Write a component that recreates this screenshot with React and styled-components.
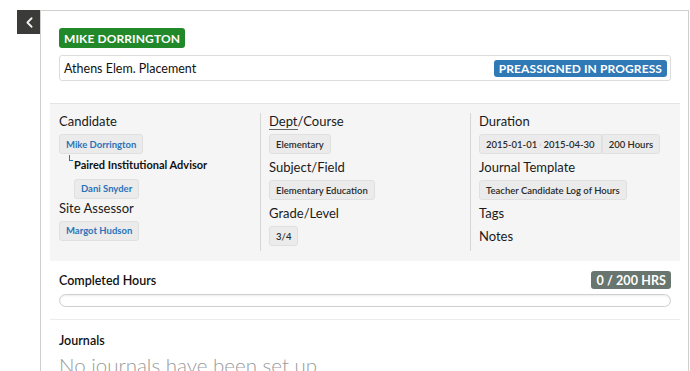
import React from "react";
import styled, { createGlobalStyle } from "styled-components";
import { ChevronLeft } from "lucide-react";

const Global = createGlobalStyle`
  html, body { margin: 0; padding: 0; background: #fff; }
  body { font-family: Lato, "Open Sans", sans-serif; color: #222; overflow: hidden; }
`;

const Page = styled.div`
  display: flex;
  align-items: flex-start;
  padding: 10px 1px 0 17px;
  height: 361px;
  overflow: hidden;
`;

const BackButton = styled.button`
  width: 24px;
  height: 24px;
  flex: none;
  border: none;
  padding: 0;
  background: #3b3b39;
  color: #f2f2f2;
  display: flex;
  align-items: center;
  justify-content: center;
`;

const Panel = styled.div`
  flex: 1;
  min-height: 400px;
  margin-left: -1px;
  border: 1px solid #cfcfcf;
  border-bottom: none;
  background: #fff;
`;

const Header = styled.div`
  padding: 17px 17px 22px 18px;
  display: flex;
  flex-direction: column;
  align-items: flex-start;
  gap: 7px;
`;

const Label = styled.span`
  display: inline-flex;
  align-items: center;
  height: ${(p) => p.$h || 20}px;
  padding: 0 ${(p) => p.$px || 5}px;
  border-radius: 3px;
  background: ${(p) => p.$bg};
  color: #fff;
  font-weight: 700;
  font-size: ${(p) => p.$fs || 12}px;
  letter-spacing: 0.1px;
  white-space: nowrap;
`;

const PlacementBox = styled.div`
  align-self: stretch;
  height: 24px;
  border: 1px solid #dcdcdc;
  border-radius: 3px;
  display: flex;
  align-items: center;
  justify-content: space-between;
  padding: 0 3px 0 4px;
  font-size: 12.5px;
  color: #111;
`;

const InfoSection = styled.div`
  margin: 0 8px 0 9px;
  background: #f5f5f5;
  border-top: 1px solid #e4e4e4;
  display: grid;
  grid-template-columns: 210px 210px 1fr;
  padding: 9px 0 10px;
`;

const Column = styled.div`
  padding: 0 9px 0 ${(p) => (p.$first ? 9 : 8)}px;
  border-left: ${(p) => (p.$first ? "none" : "1px solid #d6d6d6")};
  display: flex;
  flex-direction: column;
  align-items: flex-start;
`;

const Field = styled.div`
  display: flex;
  flex-direction: column;
  align-items: flex-start;
  gap: 4px;
  margin-bottom: ${(p) => (p.$mb !== undefined ? p.$mb : 5)}px;
`;

const Heading = styled.div`
  font-size: 13px;
  line-height: 17px;
  color: #1a1a1a;
`;

const Abbr = styled.span`
  border-bottom: 1px solid #666;
`;

const Chip = styled.span`
  display: inline-flex;
  align-items: center;
  height: 20px;
  box-sizing: border-box;
  padding: 0 6px;
  background: #ebebeb;
  border: 1px solid #e0e0e0;
  border-radius: ${(p) => p.$radius || "3px"};
  font-size: 9.5px;
  font-weight: ${(p) => (p.$link ? 700 : 600)};
  color: ${(p) => (p.$link ? "#2a73b8" : "#2a2a2a")};
  white-space: nowrap;
`;

const ChipGroup = styled.div`
  display: flex;
`;

const Sep = styled.span`
  color: #c4c4c4;
  margin: 0 2px;
  font-size: 8px;
`;

const SubRole = styled.div`
  display: flex;
  flex-direction: column;
  align-items: flex-start;
  gap: 3px;
  margin: 3px 0 1px 10px;
`;

const SubRoleLabel = styled.div`
  position: relative;
  padding-left: 5px;
  font-size: 11px;
  line-height: 16px;
  font-weight: 700;
  color: #111;
  &::before {
    content: "";
    position: absolute;
    left: 0;
    top: -2px;
    width: 3px;
    height: 5px;
    border-left: 1px solid #2a73b8;
    border-bottom: 1px solid #2a73b8;
  }
`;

const SubRoleChip = styled.div`
  padding-left: 5px;
`;

const HoursSection = styled.div`
  margin: 0 8px 0 9px;
  padding: 10px 9px 12px;
  border-bottom: 1px solid #ececec;
  display: flex;
  flex-direction: column;
  gap: 5px;
`;

const HoursRow = styled.div`
  display: flex;
  align-items: center;
  justify-content: space-between;
`;

const SmallTitle = styled.div`
  font-size: 12.5px;
  font-weight: 600;
  color: #111;
`;

const Progress = styled.div`
  height: 13px;
  box-sizing: border-box;
  border: 1px solid #cfcfcf;
  border-radius: 7px;
  background: #fff;
  box-shadow: inset 0 1px 2px rgba(0, 0, 0, 0.08);
`;

const Journals = styled.div`
  margin: 0 8px 0 9px;
  padding: 13px 9px 0;
  display: flex;
  flex-direction: column;
  gap: 5px;
`;

const EmptyText = styled.div`
  font-size: 20.5px;
  font-weight: 300;
  color: #9a9a9a;
  line-height: 24px;
`;

export default function App() {
  return (
    <>
      <Global />
      <Page>
        <BackButton aria-label="Back">
          <ChevronLeft size={17} strokeWidth={2.5} />
        </BackButton>
        <Panel>
          <Header>
            <Label $bg="#22892b">MIKE DORRINGTON</Label>
            <PlacementBox>
              <span>Athens Elem. Placement</span>
              <Label $bg="#2f79b7" $h={17} $fs={12}>PREASSIGNED IN PROGRESS</Label>
            </PlacementBox>
          </Header>

          <InfoSection>
            <Column $first>
              <Field $mb={0}>
                <Heading>Candidate</Heading>
                <Chip $link>Mike Dorrington</Chip>
              </Field>
              <SubRole>
                <SubRoleLabel>Paired Institutional Advisor</SubRoleLabel>
                <SubRoleChip>
                  <Chip $link>Dani Snyder</Chip>
                </SubRoleChip>
              </SubRole>
              <Field>
                <Heading>Site Assessor</Heading>
                <Chip $link>Margot Hudson</Chip>
              </Field>
            </Column>
            <Column>
              <Field>
                <Heading><Abbr>Dept</Abbr>/Course</Heading>
                <Chip>Elementary</Chip>
              </Field>
              <Field>
                <Heading>Subject/Field</Heading>
                <Chip>Elementary Education</Chip>
              </Field>
              <Field>
                <Heading>Grade/Level</Heading>
                <Chip>3/4</Chip>
              </Field>
            </Column>
            <Column>
              <Field>
                <Heading>Duration</Heading>
                <ChipGroup>
                  <Chip $radius="3px 0 0 3px">2015-01-01<Sep>›</Sep>2015-04-30</Chip>
                  <Chip $radius="0 3px 3px 0">200 Hours</Chip>
                </ChipGroup>
              </Field>
              <Field>
                <Heading>Journal Template</Heading>
                <Chip>Teacher Candidate Log of Hours</Chip>
              </Field>
              <Field $mb={6}>
                <Heading>Tags</Heading>
              </Field>
              <Field $mb={0}>
                <Heading>Notes</Heading>
              </Field>
            </Column>
          </InfoSection>

          <HoursSection>
            <HoursRow>
              <SmallTitle>Completed Hours</SmallTitle>
              <Label $bg="#69756f" $h={18} $px={5} $fs={12.5}>0 / 200 HRS</Label>
            </HoursRow>
            <Progress />
          </HoursSection>

          <Journals>
            <SmallTitle>Journals</SmallTitle>
            <EmptyText>No journals have been set up</EmptyText>
          </Journals>
        </Panel>
      </Page>
    </>
  );
}
